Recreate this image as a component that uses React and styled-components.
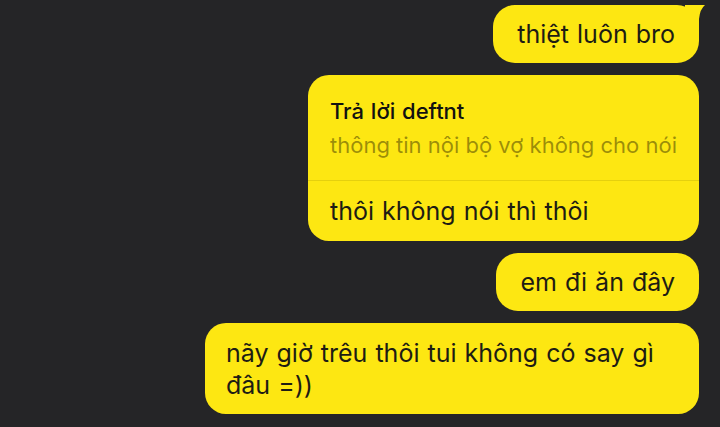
import React from 'react';
import styled, { createGlobalStyle } from 'styled-components';

const GlobalStyle = createGlobalStyle`
  html, body {
    margin: 0;
    padding: 0;
    background: #252527;
  }
  * {
    box-sizing: border-box;
  }
`;

const Screen = styled.div`
  width: 720px;
  height: 427px;
  overflow: hidden;
  background: #252527;
  display: flex;
  flex-direction: column;
  align-items: flex-end;
  gap: 12px;
  padding: 5px 21px 0 0;
  font-family: Inter, 'Noto Sans', sans-serif;
`;

const Bubble = styled.div`
  position: relative;
  background: #fde712;
  color: #1d1c14;
  border-radius: ${p => (p.$big ? '21px' : '22px')};
  font-size: 25px;
  line-height: 32px;
  word-spacing: 1px;
  padding: ${p => p.$pad || '13px 24px'};
  max-width: ${p => p.$max || 'none'};
`;

const Tail = styled.svg`
  position: absolute;
  top: 0;
  right: -6px;
  width: 20px;
  height: 26px;
`;

const Quote = styled.div`
  padding: 23px 22px 18px;
  border-bottom: 1px solid rgba(120, 105, 0, 0.18);
`;

const QuoteTitle = styled.div`
  font-size: 22px;
  line-height: 26px;
  font-weight: 500;
  word-spacing: 1px;
  color: #111;
`;

const QuoteText = styled.div`
  margin-top: 4px;
  font-size: 22px;
  line-height: 34px;
  word-spacing: 0;
  color: rgba(60, 52, 0, 0.5);
  white-space: nowrap;
`;

const Body = styled.div`
  padding: ${p => p.$pad || '0'};
`;

export default function App() {
  return (
    <>
      <GlobalStyle />
      <Screen>
        <Bubble>
          thiệt luôn bro
          <Tail viewBox="0 0 20 26">
            <path d="M0 0 L20 0 Q15 4 14 14 L14 26 L0 26 Z" fill="#fde712" />
          </Tail>
        </Bubble>
        <Bubble $big $pad="0">
          <Quote>
            <QuoteTitle>Trả lời deftnt</QuoteTitle>
            <QuoteText>thông tin nội bộ vợ không cho nói</QuoteText>
          </Quote>
          <Body $pad="14px 22px 14px">thôi không nói thì thôi</Body>
        </Bubble>
        <Bubble>em đi ăn đây</Bubble>
        <Bubble $big $max="494px" $pad="14px 21px 13px">
          nãy giờ trêu thôi tui không có say gì đâu =))
        </Bubble>
      </Screen>
    </>
  );
}
